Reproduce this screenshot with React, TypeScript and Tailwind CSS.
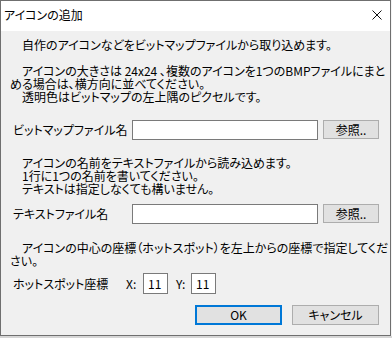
const font = "font-['Noto_Sans_CJK_JP','Noto_Sans',sans-serif] [font-feature-settings:'palt']";

function Field({ label }: { label: string }) {
  return (
    <div className="flex items-start h-[20px]">
      <span className="w-[122px] pl-[3px] leading-[20px]">{label}</span>
      <div className="w-[186px] h-[20px] bg-white border border-[#7a7a7a]" />
      <button className="ml-[5px] w-[56px] h-[19px] bg-[#e1e1e1] border border-[#adadad] leading-[17px] text-center">
        参照..
      </button>
    </div>
  );
}

export default function App() {
  return (
    <div className={`w-[392px] h-[338px] bg-[#f4f4f4] text-[12px] text-black ${font}`}>
      <div className="w-[391px] h-[336px] border border-[#6f6f6f] flex flex-col bg-[#f0f0f0]">
        {/* title bar */}
        <div className="h-[30px] bg-white flex items-center justify-between pl-[3px] pr-[8px] shrink-0">
          <span className="leading-[14px] -mt-[2px]">アイコンの追加</span>
          <svg width="10" height="10" viewBox="0 0 10 10" className="-mt-[2px]">
            <path d="M0.5 0.5 L9.5 9.5 M9.5 0.5 L0.5 9.5" stroke="#111" strokeWidth="1" />
          </svg>
        </div>

        <div className="flex flex-col pl-[9px] leading-[13px] whitespace-pre">
          <div className="mt-[7px]">
            <div>　自作のアイコンなどをビットマップファイルから取り込めます。</div>
            <div>&nbsp;</div>
            <div>　アイコンの大きさは 24x24 、複数のアイコンを1つのBMPファイルにまと</div>
            <div>める場合は、横方向に並べてください。</div>
            <div>　透明色はビットマップの左上隅のピクセルです。</div>
          </div>

          <div className="mt-[17px]">
            <Field label="ビットマップファイル名" />
          </div>

          <div className="mt-[16px]">
            <div>　アイコンの名前をテキストファイルから読み込めます。</div>
            <div>　1行に1つの名前を書いてください。</div>
            <div>　テキストは指定しなくても構いません。</div>
          </div>

          <div className="mt-[9px]">
            <Field label="テキストファイル名" />
          </div>

          <div className="mt-[17px]">
            <div>　アイコンの中心の座標（ホットスポット）を左上からの座標で指定してくだ</div>
            <div>さい。</div>
          </div>

          <div className="mt-[6px] flex items-center h-[21px]">
            <span className="w-[116px] pl-[3px]">ホットスポット座標</span>
            <span className="w-[17px]">X:</span>
            <div className="w-[25px] h-[21px] bg-white border border-[#7a7a7a] pl-[4px] leading-[19px]">11</div>
            <span className="ml-[8px] w-[15px]">Y:</span>
            <div className="w-[25px] h-[21px] bg-white border border-[#7a7a7a] pl-[4px] leading-[19px]">11</div>
          </div>

          <div className="mt-[11px] flex justify-end pr-[11px] gap-[10px]">
            <button className="w-[87px] h-[20px] bg-[#e1e1e1] border-2 border-[#0078d7] leading-[16px] text-center">
              OK
            </button>
            <button className="w-[87px] h-[20px] bg-[#e1e1e1] border border-[#adadad] leading-[18px] text-center">
              キャンセル
            </button>
          </div>
        </div>
      </div>
      <div className="h-[2px] bg-[#d6d6d6]" />
    </div>
  );
}
